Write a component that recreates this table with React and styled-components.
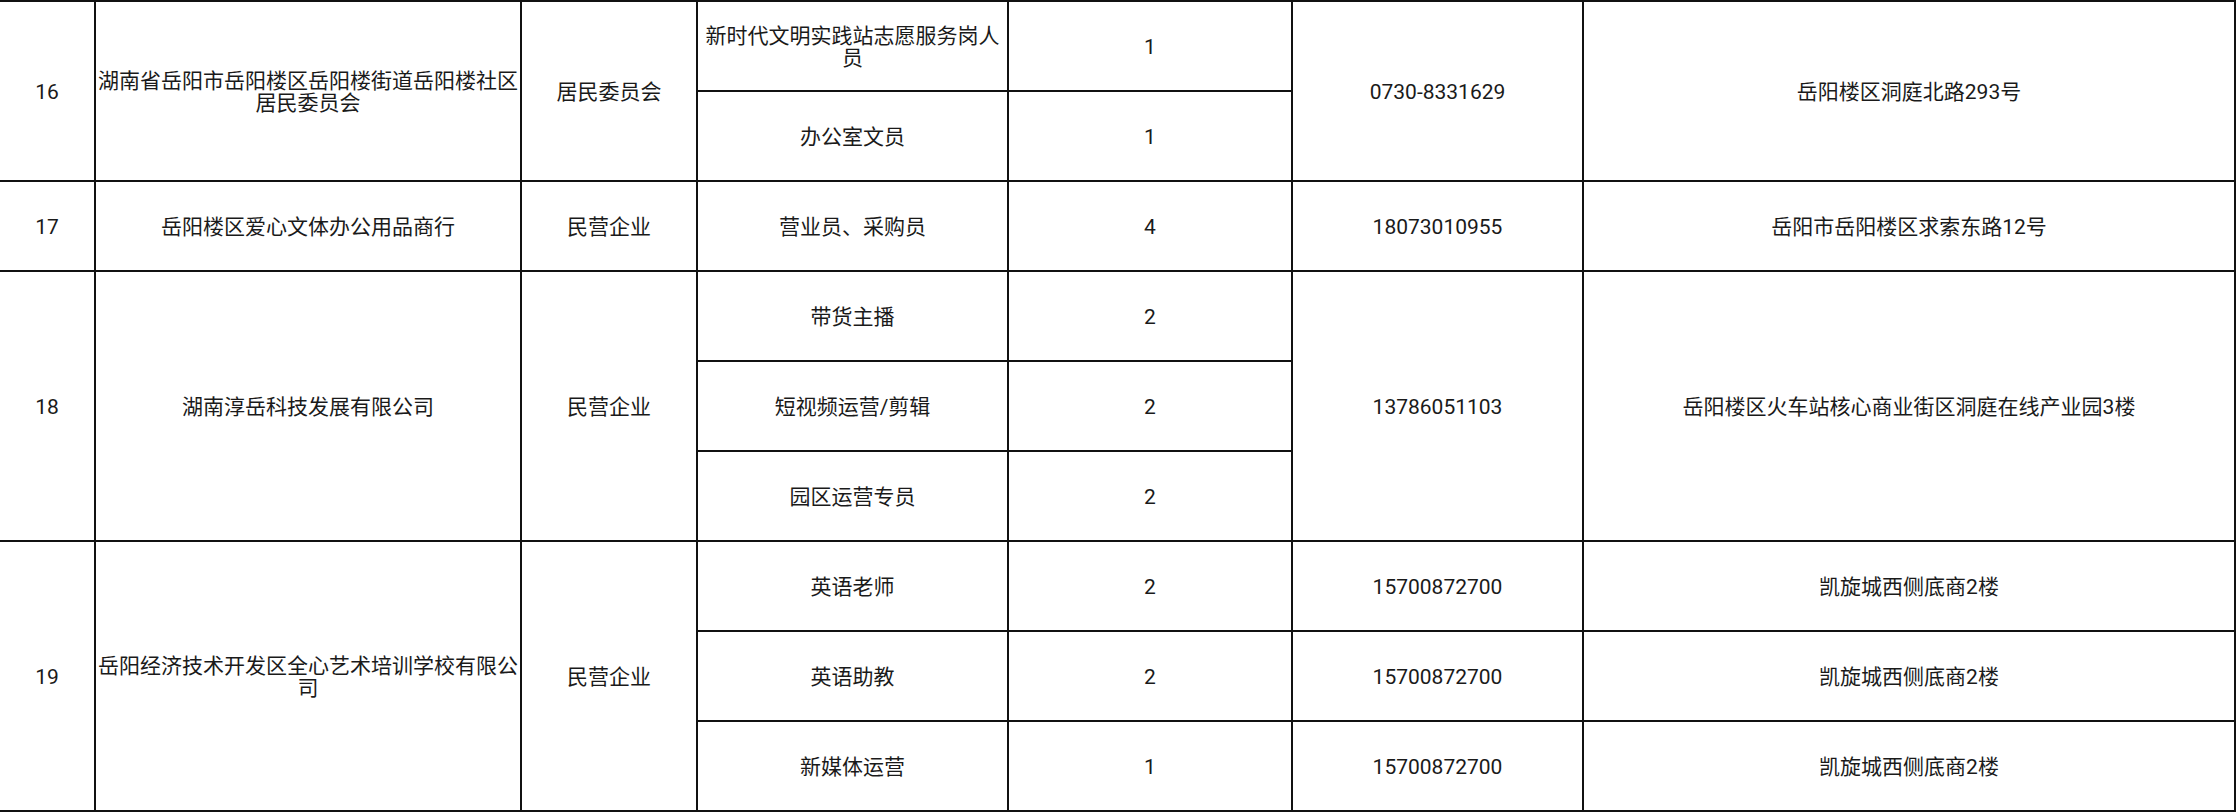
import React from "react"
import styled, { createGlobalStyle } from "styled-components"

const GlobalStyle = createGlobalStyle`
  html, body {
    margin: 0;
    padding: 0;
    background: #fff;
  }
  body {
    font-family: Roboto, "Noto Sans CJK SC", sans-serif;
    color: #1a1a1a;
  }
`

const Sheet = styled.table`
  width: 2235px;
  table-layout: fixed;
  border-collapse: collapse;
  border-top: 2px solid #333;
  border-bottom: 2px solid #555;
  font-size: 21px;
  line-height: 22px;
`

const Cell = styled.td`
  height: 86px;
  padding: 2px 1px 0;
  border: 2px solid #111;
  text-align: center;
  vertical-align: middle;
  word-break: break-all;
  &:first-child {
    border-left: none;
  }
`

const widths = [95, 426, 176, 311, 284, 291, 652]

const companies = [
  {
    no: 16,
    name: "湖南省岳阳市岳阳楼区岳阳楼街道岳阳楼社区居民委员会",
    kind: "居民委员会",
    phone: "0730-8331629",
    address: "岳阳楼区洞庭北路293号",
    jobs: [
      { title: "新时代文明实践站志愿服务岗人员", count: 1 },
      { title: "办公室文员", count: 1 }
    ]
  },
  {
    no: 17,
    name: "岳阳楼区爱心文体办公用品商行",
    kind: "民营企业",
    phone: "18073010955",
    address: "岳阳市岳阳楼区求索东路12号",
    jobs: [{ title: "营业员、采购员", count: 4 }]
  },
  {
    no: 18,
    name: "湖南淳岳科技发展有限公司",
    kind: "民营企业",
    phone: "13786051103",
    address: "岳阳楼区火车站核心商业街区洞庭在线产业园3楼",
    jobs: [
      { title: "带货主播", count: 2 },
      { title: "短视频运营/剪辑", count: 2 },
      { title: "园区运营专员", count: 2 }
    ]
  },
  {
    no: 19,
    name: "岳阳经济技术开发区全心艺术培训学校有限公司",
    kind: "民营企业",
    jobs: [
      { title: "英语老师", count: 2, phone: "15700872700", address: "凯旋城西侧底商2楼" },
      { title: "英语助教", count: 2, phone: "15700872700", address: "凯旋城西侧底商2楼" },
      { title: "新媒体运营", count: 1, phone: "15700872700", address: "凯旋城西侧底商2楼" }
    ]
  }
]

function CompanyRows({ company }) {
  const span = company.jobs.length
  const shared = Boolean(company.phone)
  return company.jobs.map((job, idx) => (
    <tr key={idx}>
      {idx === 0 && (
        <>
          <Cell rowSpan={span}>{company.no}</Cell>
          <Cell rowSpan={span}>{company.name}</Cell>
          <Cell rowSpan={span}>{company.kind}</Cell>
        </>
      )}
      <Cell>{job.title}</Cell>
      <Cell>{job.count}</Cell>
      {shared ? (
        idx === 0 && (
          <>
            <Cell rowSpan={span}>{company.phone}</Cell>
            <Cell rowSpan={span}>{company.address}</Cell>
          </>
        )
      ) : (
        <>
          <Cell>{job.phone}</Cell>
          <Cell>{job.address}</Cell>
        </>
      )}
    </tr>
  ))
}

export default function App() {
  return (
    <>
      <GlobalStyle />
      <Sheet>
        <colgroup>
          {widths.map((w, i) => (
            <col key={i} style={{ width: w }} />
          ))}
        </colgroup>
        <tbody>
          {companies.map(c => (
            <CompanyRows key={c.no} company={c} />
          ))}
        </tbody>
      </Sheet>
    </>
  )
}
